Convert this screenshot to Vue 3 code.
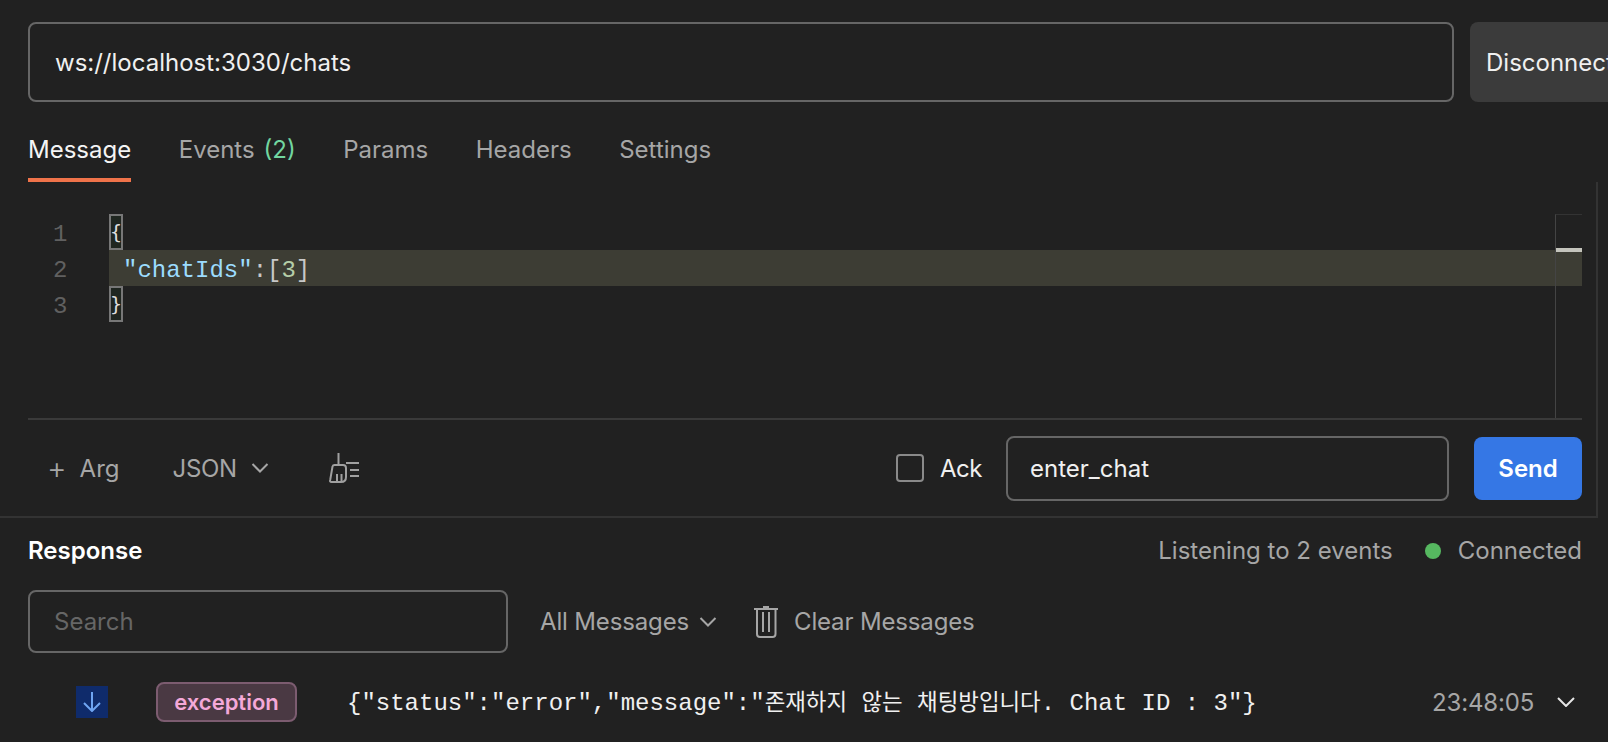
<script setup>
const tabs = [
  { name: 'Message', active: true },
  { name: 'Events', count: '(2)' },
  { name: 'Params' },
  { name: 'Headers' },
  { name: 'Settings' }
]
</script>

<template>
  <div class="app">
    <section class="request">
      <div class="url-row">
        <div class="field url">ws://localhost:3030/chats</div>
        <div class="disconnect">Disconnect</div>
      </div>

      <nav class="tabs">
        <div v-for="t in tabs" :key="t.name" class="tab" :class="{ active: t.active }">
          {{ t.name }}<span v-if="t.count" class="count">{{ t.count }}</span>
        </div>
      </nav>

      <div class="editor">
        <div class="line"><span class="num">1</span><span class="brace">{</span></div>
        <div class="line current"><span class="num">2</span><span class="code"><span class="key">"chatIds"</span><span class="punc">:[</span><span class="val">3</span><span class="punc">]</span></span></div>
        <div class="line"><span class="num">3</span><span class="brace">}</span></div>
        <div class="minimap"><div class="slider"></div></div>
      </div>

      <div class="toolbar">
        <div class="tool-left">
          <span class="plus">+</span><span class="arg">Arg</span>
          <span class="json">JSON</span>
          <svg class="chev" width="18" height="10" viewBox="0 0 18 10"><path d="M1.500 1 9 8.500 16.500 1" fill="none" stroke="#a6a6a6" stroke-width="2"/></svg>
          <svg class="broom" width="32" height="30" viewBox="0 0 32 30" fill="none" stroke="#a0a0a0" stroke-width="2">
            <path d="M9.500 0V12"/>
            <path d="M3.500 13.500Q4 12 5.500 12H14Q17 12 17 15V24Q17 29 12 29H2.500Q.5 29 1.200 27Z"/>
            <path d="M8 28V21M12.500 28V21"/>
            <path d="M17 10H30M21 17H30M21 23H30"/>
          </svg>
        </div>
        <div class="tool-right">
          <span class="check"></span>
          <span class="ack">Ack</span>
          <div class="field event">enter_chat</div>
          <div class="send">Send</div>
        </div>
      </div>
    </section>

    <section class="response">
      <div class="res-head">
        <div class="res-title">Response</div>
        <div class="status">
          <span>Listening to 2 events</span>
          <span class="dot"></span>
          <span>Connected</span>
        </div>
      </div>

      <div class="filters">
        <div class="field search">Search</div>
        <span class="all">All Messages</span>
        <svg class="chev2" width="18" height="10" viewBox="0 0 18 10"><path d="M1.500 1 9 8.500 16.500 1" fill="none" stroke="#a6a6a6" stroke-width="2"/></svg>
        <svg class="trash" width="24" height="32" viewBox="0 0 24 32" fill="none" stroke="#a6a6a6" stroke-width="2">
          <path d="M0 3H24"/>
          <path d="M9 1H15"/>
          <path d="M3 4V28Q3 31 6 31H18.500Q21.500 31 21.500 28V4"/>
          <path d="M9 6V26M15 6V26"/>
        </svg>
        <span class="clear">Clear Messages</span>
      </div>

      <div class="msg">
        <span class="arrow">
          <svg width="18" height="20" viewBox="0 0 18 20" fill="none" stroke="#6fa5f2" stroke-width="2"><path d="M9 0V19M1 11l8 8 8-8"/></svg>
        </span>
        <span class="badge">exception</span>
        <span class="body">{"status":"error","message":"<span class="ko">존재하지</span> <span class="ko">않는</span> <span class="ko">채팅방입니다</span>. Chat ID : 3"}</span>
        <span class="time">23:48:05</span>
        <svg class="chev3" width="18" height="10" viewBox="0 0 18 10"><path d="M1 1 9 9 17 1" fill="none" stroke="#e6e6e6" stroke-width="2"/></svg>
      </div>
    </section>
  </div>
</template>

<style>
html, body { margin: 0; background: #212121; overflow: hidden; }
</style>

<style scoped>
.app {
  width: 1608px;
  height: 742px;
  overflow: hidden;
  background: #212121;
  color: #a6a6a6;
  font-family: Inter, "Noto Sans", sans-serif;
  font-size: 24px;
  box-sizing: border-box;
}
.request {
  width: 1598px;
  height: 518px;
  box-sizing: border-box;
  border-bottom: 2px solid #333;
  position: relative;
}
.request::after {
  content: "";
  position: absolute;
  right: 0;
  top: 182px;
  bottom: 0;
  width: 2px;
  background: #333;
}
.url-row {
  display: flex;
  padding: 22px 0 0 28px;
  gap: 16px;
}
.field {
  box-sizing: border-box;
  border: 2px solid #666;
  border-radius: 8px;
  display: flex;
  align-items: center;
}
.url {
  flex: none;
  width: 1426px;
  height: 80px;
  padding-left: 25px;
  color: #f0f0f0;
}
.disconnect {
  flex: none;
  width: 160px;
  height: 80px;
  box-sizing: border-box;
  padding-left: 16px;
  display: flex;
  align-items: center;
  background: #3b3b3b;
  border-radius: 8px 0 0 8px;
  color: #f0f0f0;
  white-space: nowrap;
}
.tabs {
  display: flex;
  gap: 47.5px;
  margin: 24px 0 0 28px;
  height: 56px;
  box-sizing: border-box;
}
.tab {
  height: 56px;
  box-sizing: border-box;
  line-height: 48px;
  white-space: nowrap;
}
.tab.active {
  color: #f4f4f4;
  border-bottom: 4px solid #f0734a;
}
.count { color: #72d6a0; margin-left: 9px; }
.editor {
  position: relative;
  height: 238px;
  margin-left: 28px;
  width: 1554px;
  padding-top: 32px;
  box-sizing: border-box;
  border-bottom: 2px solid #3a3a3a;
  font-family: "Liberation Mono", monospace;
  font-size: 24px;
}
.line {
  display: flex;
  height: 36px;
  line-height: 41px;
}
.num {
  width: 81px;
  padding-left: 25px;
  box-sizing: border-box;
  color: #606060;
  flex: none;
  line-height: 42px;
}
.brace {
  box-sizing: border-box;
  width: 14px;
  height: 36px;
  border: 2px solid #777;
  background: #1f2620;
  color: #ddd;
  display: flex;
  align-items: center;
  justify-content: center;
  font-family: "DejaVu Sans Mono", monospace;
  font-size: 20px;
  line-height: 32px;
}
.current .code {
  flex: 1;
  background: #3d3d34;
  padding-left: 14px;
}
.key { color: #9cdcfe; }
.punc { color: #c8c8c8; }
.val { color: #b5cea8; }
.minimap {
  position: absolute;
  right: 0;
  top: 32px;
  bottom: 0;
  width: 27px;
  box-sizing: border-box;
  border-left: 1px solid #444;
  border-top: 1px solid #333;
}
.slider {
  position: absolute;
  left: 0;
  right: 0;
  top: 33px;
  height: 4px;
  background: #c4c4bc;
}
.toolbar {
  display: flex;
  justify-content: space-between;
  align-items: center;
  height: 96px;
  width: 1554px;
  margin-left: 28px;
}
.tool-left, .tool-right { display: flex; align-items: center; }
.plus { margin-left: 19px; font-size: 30px; font-weight: 300; line-height: 30px; }
.arg { margin-left: 13px; }
.json { margin-left: 53px; letter-spacing: -0.3px; }
.chev { margin-left: 14px; }
.broom { margin-left: 60px; }
.check {
  box-sizing: border-box;
  width: 28px;
  height: 28px;
  border: 2px solid #8a8a8a;
  border-radius: 4px;
}
.ack { margin-left: 16px; color: #f0f0f0; letter-spacing: -0.5px; }
.event {
  box-sizing: border-box;
  margin-left: 24px;
  width: 443px;
  height: 65px;
  padding-left: 22px;
  color: #f0f0f0;
}
.send {
  margin-left: 25px;
  width: 108px;
  height: 63px;
  display: flex;
  align-items: center;
  justify-content: center;
  background: #3577e5;
  color: #fff;
  border-radius: 8px;
  font-weight: 600;
}
.response { padding: 0 0 0 28px; }
.res-head {
  display: flex;
  justify-content: space-between;
  align-items: center;
  width: 1554px;
  height: 65px;
}
.res-title { color: #fff; font-weight: 600; }
.status { display: flex; align-items: center; }
.dot {
  width: 16px;
  height: 16px;
  border-radius: 50%;
  background: #56b860;
  margin: 0 17px 0 32px;
}
.filters {
  display: flex;
  align-items: center;
  margin-top: 7px;
}
.search {
  width: 480px;
  height: 63px;
  padding-left: 24px;
  color: #666;
}
.all { margin-left: 32px; letter-spacing: -0.15px; }
.chev2 { margin-left: 10px; }
.trash { margin-left: 37px; }
.clear { margin-left: 16px; letter-spacing: -0.15px; }
.msg {
  display: flex;
  align-items: center;
  margin-top: 29px;
  height: 40px;
}
.arrow {
  margin-left: 48px;
  width: 32px;
  height: 32px;
  background: #0f2b6b;
  display: flex;
  align-items: center;
  justify-content: center;
}
.badge {
  margin-left: 48px;
  box-sizing: border-box;
  width: 141px;
  height: 40px;
  background: #4a3943;
  border: 2px solid #7c5c70;
  border-radius: 8px;
  color: #f4a8d8;
  font-weight: 600;
  font-size: 22px;
  display: flex;
  align-items: center;
  justify-content: center;
}
.body {
  margin-left: 50px;
  width: 1085px;
  color: #f0f0f0;
  font-family: "Liberation Mono", "Noto Sans CJK KR", monospace;
  white-space: pre;
  padding-bottom: 4px;
}
.ko { font-size: 22.4px; }
.time { width: 125px; letter-spacing: -0.15px; }
.chev3 { flex: none; }
</style>
